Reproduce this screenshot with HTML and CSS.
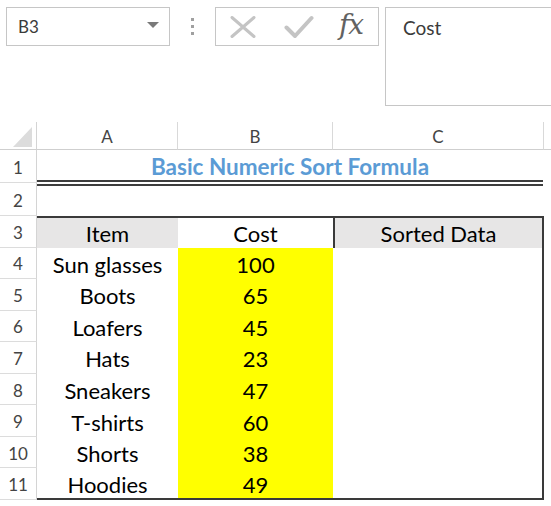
FILE: index.html
```html
<!DOCTYPE html>
<html>
<head>
<meta charset="utf-8">
<link rel="stylesheet" href="styles.css">
</head>
<body>
<div class="app">
  <div class="toolbar">
    <div class="namebox"><span class="ref">B3</span><span class="caret"></span></div>
    <div class="grip"><i></i><i></i><i></i></div>
    <div class="fbtns">
      <svg class="ico-x" width="26" height="22" viewBox="0 0 26 22"><path d="M2 1.5 L24 20.5 M24 1.5 L2 20.5" stroke="#c4c4c4" stroke-width="3" fill="none" stroke-linecap="round"/></svg>
      <svg class="ico-ok" width="30" height="24" viewBox="0 0 30 24"><path d="M2.5 12.5 L11 21 L27.5 3" stroke="#c4c4c4" stroke-width="4" fill="none" stroke-linecap="round" stroke-linejoin="round"/></svg>
      <span class="fx">fx</span>
    </div>
    <div class="fbar">Cost</div>
  </div>

  <div class="sheet">
    <div class="corner"><svg width="19" height="20" viewBox="0 0 19 20"><path d="M19 0 L19 20 L0 20 Z" fill="#dcdcdc"/></svg></div>
    <div class="ch">A</div>
    <div class="ch">B</div>
    <div class="ch">C</div>
    <div class="ch fill"></div>

    <div class="rh">1</div>
    <div class="title">Basic Numeric Sort Formula</div>

    <div class="rh">2</div>
    <div class="blank"></div>

    <div class="rh">3</div>
    <div class="c head gray">Item</div>
    <div class="c head">Cost</div>
    <div class="c head gray boxed">Sorted Data</div>

    <div class="rh">4</div><div class="c">Sun glasses</div><div class="c yel">100</div><div class="c last"></div>
    <div class="rh">5</div><div class="c">Boots</div><div class="c yel">65</div><div class="c last"></div>
    <div class="rh">6</div><div class="c">Loafers</div><div class="c yel">45</div><div class="c last"></div>
    <div class="rh">7</div><div class="c">Hats</div><div class="c yel">23</div><div class="c last"></div>
    <div class="rh">8</div><div class="c">Sneakers</div><div class="c yel">47</div><div class="c last"></div>
    <div class="rh">9</div><div class="c">T-shirts</div><div class="c yel">60</div><div class="c last"></div>
    <div class="rh">10</div><div class="c">Shorts</div><div class="c yel">38</div><div class="c last"></div>
    <div class="rh">11</div><div class="c bottom">Hoodies</div><div class="c yel bottom">49</div><div class="c last bottom"></div>
  </div>
</div>
</body>
</html>
```

FILE: styles.css
```css
html, body {
  margin: 0;
  padding: 0;
  background: #ffffff;
  overflow: hidden;
}

.app {
  width: 551px;
  height: 506px;
  overflow: hidden;
  font-family: Lato, "Open Sans", sans-serif;
  color: #000;
}

/* ---------- toolbar ---------- */
.toolbar {
  display: flex;
  align-items: flex-start;
  height: 122px;
  box-sizing: border-box;
  padding: 7px 0 0 6px;
}

.toolbar > * {
  flex: none;
}

.namebox {
  width: 164px;
  height: 39px;
  box-sizing: border-box;
  border: 1px solid #c6c6c6;
  display: flex;
  align-items: center;
  justify-content: space-between;
  padding: 0 10px 0 11px;
}

.ref {
  font-size: 17px;
  color: #3b3b3b;
}

.caret {
  width: 0;
  height: 0;
  border-left: 6px solid transparent;
  border-right: 6px solid transparent;
  border-top: 6px solid #7a7a7a;
  margin-top: -3px;
}

.grip {
  width: 45px;
  height: 39px;
  display: flex;
  flex-direction: column;
  align-items: center;
  justify-content: center;
  gap: 4px;
}

.grip i {
  display: block;
  width: 3px;
  height: 3px;
  background: #a0a0a0;
}

.fbtns {
  width: 164px;
  height: 39px;
  box-sizing: border-box;
  border: 1px solid #c6c6c6;
  display: flex;
  align-items: center;
  padding-left: 14px;
}

.ico-x { margin-right: 28px; }
.ico-ok { margin-right: 25px; margin-top: 1px; }

.fx {
  font-family: "DejaVu Serif", "Liberation Serif", serif;
  font-style: italic;
  font-size: 28px;
  color: #626262;
  letter-spacing: -1px;
  line-height: 1;
  margin-top: -3px;
}

.fbar {
  margin-left: 6px;
  width: 180px;
  height: 99px;
  box-sizing: border-box;
  border: 1px solid #c6c6c6;
  border-right: none;
  padding: 9px 0 0 17px;
  font-size: 19px;
  line-height: 22px;
  color: #3b3b3b;
}

/* ---------- sheet ---------- */
.sheet {
  display: grid;
  grid-template-columns: 37px 141px 155px 211px 1fr;
  grid-template-rows: 28px 33px 33px repeat(9, 31.55px);
}

.corner {
  border-right: 1px solid #d4d4d4;
  border-bottom: 1px solid #cfcfcf;
  display: flex;
  align-items: flex-end;
  justify-content: flex-end;
  padding: 0 4px 2px 0;
  box-sizing: border-box;
}

.ch {
  border-right: 1px solid #d9d9d9;
  border-bottom: 1px solid #cfcfcf;
  box-sizing: border-box;
  display: flex;
  align-items: center;
  justify-content: center;
  font-size: 17px;
  color: #444;
  padding-top: 1px;
}

.ch.fill { border-right: none; }

.rh {
  grid-column: 1;
  border-right: 1px solid #d4d4d4;
  border-bottom: 1px solid #dcdcdc;
  box-sizing: border-box;
  display: flex;
  align-items: center;
  justify-content: center;
  font-size: 17px;
  color: #444;
  padding-top: 2px;
}

.title {
  grid-column: 2 / 5;
  margin-bottom: -3px;
  margin-right: 1px;
  border-bottom: 6px double #3d3d3d;
  box-sizing: border-box;
  display: flex;
  align-items: center;
  justify-content: center;
  font-weight: 700;
  font-size: 22.5px;
  color: #5b9bd5;
  padding-top: 3px;
  position: relative;
  z-index: 1;
}

.blank {
  grid-column: 2 / 5;
}

.c {
  box-sizing: border-box;
  display: flex;
  align-items: center;
  justify-content: center;
  font-size: 22px;
  padding-top: 2px;
}

.head {
  border-top: 2px solid #3a3a3a;
}

.gray { background: #e7e6e6; }

.boxed {
  border-left: 2px solid #3a3a3a;
  border-right: 2px solid #3a3a3a;
}

.yel { background: #ffff00; }

.last {
  border-right: 2px solid #3a3a3a;
}

.bottom {
  border-bottom: 2px solid #3a3a3a;
}
```
